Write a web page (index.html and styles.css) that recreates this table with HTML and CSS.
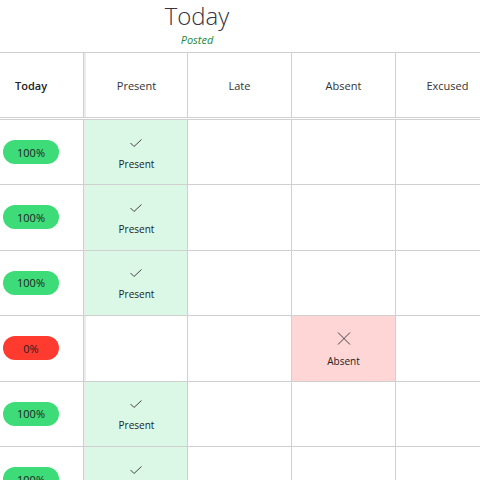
FILE: index.html
```html
<!DOCTYPE html>
<html>
<head>
<meta charset="utf-8">
<link rel="stylesheet" href="styles.css">
</head>
<body>
<div class="page">
  <header class="title-block">
    <h1 class="title">Today</h1>
    <div class="status">Posted</div>
  </header>
  <div class="grid">
    <div class="row head">
      <div class="cell c-name hd-today">Today</div>
      <div class="cell c-present">Present</div>
      <div class="cell">Late</div>
      <div class="cell c-absent-hd">Absent</div>
      <div class="cell">Excused</div>
    </div>
    <div class="row body first">
      <div class="cell c-name"><span class="pill ok">100%</span></div>
      <div class="cell c-present on-present"><div class="mark"><svg width="14" height="10" viewBox="0 0 14 10"><polyline points="1.5,5 5,8.5 12.5,1.5" fill="none" stroke="#444" stroke-width="1"/></svg><span>Present</span></div></div>
      <div class="cell"></div><div class="cell"></div><div class="cell"></div>
    </div>
    <div class="row body">
      <div class="cell c-name"><span class="pill ok">100%</span></div>
      <div class="cell c-present on-present"><div class="mark"><svg width="14" height="10" viewBox="0 0 14 10"><polyline points="1.5,5 5,8.5 12.5,1.5" fill="none" stroke="#444" stroke-width="1"/></svg><span>Present</span></div></div>
      <div class="cell"></div><div class="cell"></div><div class="cell"></div>
    </div>
    <div class="row body">
      <div class="cell c-name"><span class="pill ok">100%</span></div>
      <div class="cell c-present on-present"><div class="mark"><svg width="14" height="10" viewBox="0 0 14 10"><polyline points="1.5,5 5,8.5 12.5,1.5" fill="none" stroke="#444" stroke-width="1"/></svg><span>Present</span></div></div>
      <div class="cell"></div><div class="cell"></div><div class="cell"></div>
    </div>
    <div class="row body">
      <div class="cell c-name"><span class="pill bad">0%</span></div>
      <div class="cell c-present"></div>
      <div class="cell"></div>
      <div class="cell on-absent"><div class="mark"><svg width="14" height="13" viewBox="0 0 14 13"><path d="M1 0.5 L13 12.5 M13 0.5 L1 12.5" fill="none" stroke="#444" stroke-width="1"/></svg><span>Absent</span></div></div>
      <div class="cell"></div>
    </div>
    <div class="row body">
      <div class="cell c-name"><span class="pill ok">100%</span></div>
      <div class="cell c-present on-present"><div class="mark"><svg width="14" height="10" viewBox="0 0 14 10"><polyline points="1.5,5 5,8.5 12.5,1.5" fill="none" stroke="#444" stroke-width="1"/></svg><span>Present</span></div></div>
      <div class="cell"></div><div class="cell"></div><div class="cell"></div>
    </div>
    <div class="row body">
      <div class="cell c-name"><span class="pill ok">100%</span></div>
      <div class="cell c-present on-present"><div class="mark"><svg width="14" height="10" viewBox="0 0 14 10"><polyline points="1.5,5 5,8.5 12.5,1.5" fill="none" stroke="#444" stroke-width="1"/></svg><span>Present</span></div></div>
      <div class="cell"></div><div class="cell"></div><div class="cell"></div>
    </div>
  </div>
</div>
</body>
</html>
```
FILE: styles.css
```css
html, body {
  margin: 0;
  padding: 0;
  background: #fff;
  overflow: hidden;
}
body {
  font-family: "Open Sans", "Liberation Sans", sans-serif;
  color: #333;
  width: 480px;
  height: 480px;
}
.page {
  width: 600px;
}
.title-block {
  width: 394px;
  height: 52px;
  text-align: center;
  box-sizing: border-box;
}
.title {
  margin: 0;
  font-size: 24px;
  font-weight: 300;
  line-height: 32px;
  color: #3a3440;
}
.status {
  font-size: 11px;
  font-style: italic;
  line-height: 15px;
  color: #1e8a3c;
}
.grid {
  border-top: 1px solid #d0d0d0;
}
.row {
  display: flex;
  box-sizing: border-box;
}
.cell {
  box-sizing: border-box;
  width: 104px;
  flex: none;
  border-right: 1px solid #d0d0d0;
  display: flex;
  align-items: center;
  justify-content: center;
  font-size: 11px;
}
.c-name {
  width: 84px;
}
.c-present {
  border-left: 2px solid #ececec;
}
.head {
  height: 65px;
  border-bottom: 1px solid #d0d0d0;
}
.hd-today {
  font-weight: 600;
  color: #222;
  justify-content: flex-start;
  padding-left: 15px;
}
.body {
  height: 65.5px;
  border-bottom: 1px solid #d0d0d0;
}
.body.first {
  border-top: 1px solid #d0d0d0;
  margin-top: 1px;
  height: 66px;
}
.body .c-name {
  justify-content: flex-start;
  padding-left: 3px;
}
.pill {
  display: inline-flex;
  align-items: center;
  justify-content: center;
  width: 56px;
  height: 24px;
  border-radius: 12px;
  font-size: 11px;
  color: #222;
}
.pill.ok {
  background: #3ddc78;
}
.pill.bad {
  background: #ff3b30;
}
.on-present {
  background: #dbf8e7;
}
.on-absent {
  background: #ffd6d6;
}
.mark {
  display: flex;
  flex-direction: column;
  align-items: center;
  gap: 9px;
  padding-top: 4px;
  font-size: 10px;
  color: #222;
  line-height: 14px;
}
.mark svg {
  display: block;
}
```
